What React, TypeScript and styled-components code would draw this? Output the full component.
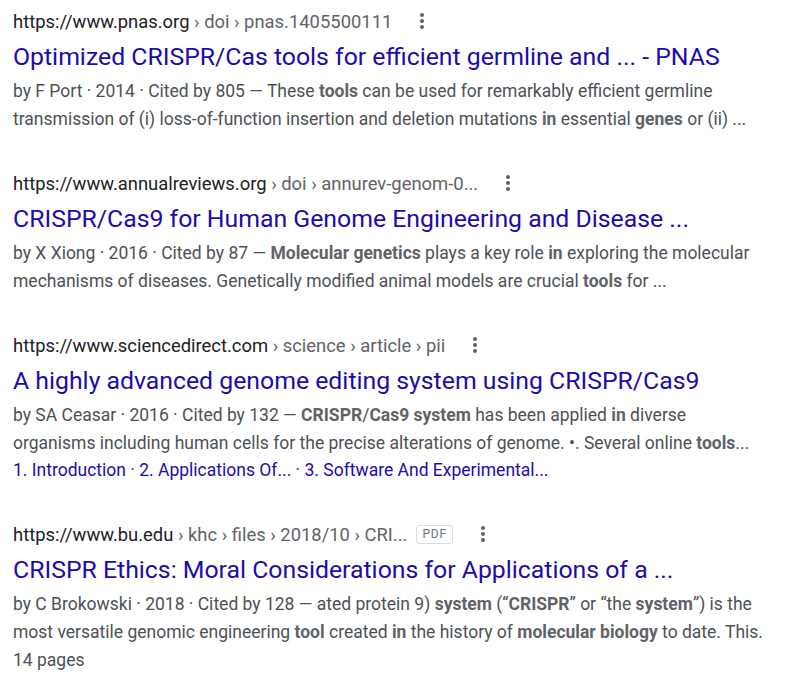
import React, { FC } from 'react';
import styled, { createGlobalStyle } from 'styled-components';

const GlobalStyle = createGlobalStyle`
  body {
    margin: 0;
    background: #fff;
    font-family: Roboto, 'Liberation Sans', sans-serif;
  }
`;

const StyledList = styled.div`
  padding: 7px 0 0 13px;
  display: flex;
  flex-direction: column;
  gap: 36px;
`;

const StyledResult = styled.div`
  display: flex;
  flex-direction: column;
`;

const StyledUrlRow = styled.div`
  display: flex;
  align-items: center;
  height: 28px;
  font-size: 18.4px;
  color: #5f6368;
  white-space: nowrap;
`;

const StyledDomain = styled.span`
  color: #202124;
`;

const StyledPdf = styled.span`
  margin-left: 9px;
  border: 1px solid #dadce0;
  border-radius: 3px;
  font-size: 12px;
  letter-spacing: 0.8px;
  color: #70757a;
  padding: 1px 5px;
  line-height: 15px;
`;

const StyledDots = styled.span`
  margin-left: 28px;
  display: inline-flex;
  flex-direction: column;
  gap: 2px;
  & > i {
    width: 4px;
    height: 4px;
    border-radius: 50%;
    background: #5f6368;
  }
`;

const StyledTitle = styled.a`
  margin-top: 7px;
  font-size: 24.8px;
  line-height: 30px;
  color: #1a0dab;
  text-decoration: none;
  white-space: nowrap;
`;

const StyledSnippet = styled.div`
  margin-top: 5px;
  font-size: 17.5px;
  line-height: 28px;
  color: #4d5156;
  white-space: nowrap;
  b {
    font-weight: 700;
    color: #5f6368;
  }
`;

const StyledSitelinks = styled.div`
  font-size: 17.5px;
  line-height: 27px;
  color: #1a0dab;
  white-space: nowrap;
  span {
    color: #4d5156;
  }
`;

interface ResultProps {
  domain: string;
  crumbs: string;
  pdf?: boolean;
  title: string;
  children: React.ReactNode;
  sitelinks?: string[];
}

const Result: FC<ResultProps> = ({ domain, crumbs, pdf, title, children, sitelinks }) => (
  <StyledResult>
    <StyledUrlRow>
      <StyledDomain>{domain}</StyledDomain>
      &nbsp;{crumbs}
      {pdf && <StyledPdf>PDF</StyledPdf>}
      <StyledDots>
        <i />
        <i />
        <i />
      </StyledDots>
    </StyledUrlRow>
    <StyledTitle href="#">{title}</StyledTitle>
    <StyledSnippet>{children}</StyledSnippet>
    {sitelinks && (
      <StyledSitelinks>
        {sitelinks.map((s, i) => (
          <React.Fragment key={i}>
            {i > 0 && <span> · </span>}
            {s}
          </React.Fragment>
        ))}
      </StyledSitelinks>
    )}
  </StyledResult>
);

const App: FC = () => (
  <>
    <GlobalStyle />
    <StyledList>
      <Result domain="https://www.pnas.org" crumbs="› doi › pnas.1405500111" title="Optimized CRISPR/Cas tools for efficient germline and ... - PNAS">
        by F Port · 2014 · Cited by 805 — These <b>tools</b> can be used for remarkably efficient germline
        <br />
        transmission of (i) loss-of-function insertion and deletion mutations <b>in</b> essential <b>genes</b> or (ii) ...
      </Result>
      <Result domain="https://www.annualreviews.org" crumbs="› doi › annurev-genom-0..." title="CRISPR/Cas9 for Human Genome Engineering and Disease ...">
        by X Xiong · 2016 · Cited by 87 — <b>Molecular genetics</b> plays a key role <b>in</b> exploring the molecular
        <br />
        mechanisms of diseases. Genetically modified animal models are crucial <b>tools</b> for ...
      </Result>
      <Result
        domain="https://www.sciencedirect.com"
        crumbs="› science › article › pii"
        title="A highly advanced genome editing system using CRISPR/Cas9"
        sitelinks={['1. Introduction', '2. Applications Of...', '3. Software And Experimental...']}
      >
        by SA Ceasar · 2016 · Cited by 132 — <b>CRISPR</b>/<b>Cas9 system</b> has been applied <b>in</b> diverse
        <br />
        organisms including human cells for the precise alterations of genome. •. Several online <b>tools</b>...
      </Result>
      <Result domain="https://www.bu.edu" crumbs="› khc › files › 2018/10 › CRI..." pdf title="CRISPR Ethics: Moral Considerations for Applications of a ...">
        by C Brokowski · 2018 · Cited by 128 — ated protein 9) <b>system</b> (“<b>CRISPR</b>” or “the <b>system</b>”) is the
        <br />
        most versatile genomic engineering <b>tool</b> created <b>in</b> the history of <b>molecular biology</b> to date. This.
        <br />
        14 pages
      </Result>
    </StyledList>
  </>
);

export default App;
